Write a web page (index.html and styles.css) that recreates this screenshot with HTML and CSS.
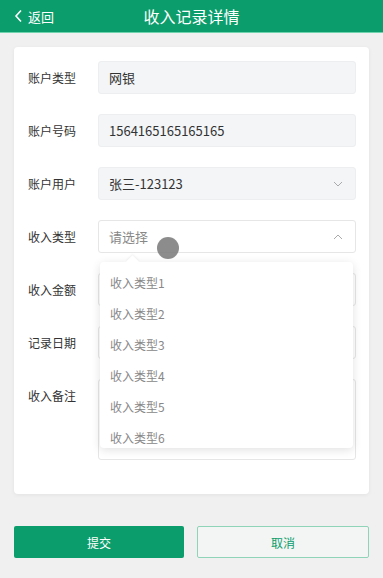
FILE: index.html
```html
<!DOCTYPE html>
<html lang="zh-CN">
<head>
    <meta charset="UTF-8">
    <meta name="viewport" content="width=device-width, initial-scale=1.0">
    <title>收入记录详情</title>
    <link rel="stylesheet" href="styles.css">
</head>
<body>
    <div class="header">
        <div class="back">
            <svg width="9" height="14" viewBox="0 0 9 14"><path d="M7 1.5 L2 7 L7 12.5" fill="none" stroke="#fff" stroke-width="1.6"/></svg>
            <span>返回</span>
        </div>
        <div class="title">收入记录详情</div>
    </div>

    <div class="card">
        <div class="row">
            <label>账户类型</label>
            <div class="field readonly">网银</div>
        </div>
        <div class="row">
            <label>账户号码</label>
            <div class="field readonly">1564165165165165</div>
        </div>
        <div class="row">
            <label>账户用户</label>
            <div class="field readonly select">
                <span>张三-123123</span>
                <svg class="caret" width="10" height="6" viewBox="0 0 10 6"><path d="M1 1 L5 5 L9 1" fill="none" stroke="#aaa" stroke-width="1"/></svg>
            </div>
        </div>
        <div class="row">
            <label>收入类型</label>
            <div class="field select open">
                <span class="placeholder">请选择</span>
                <svg class="caret" width="10" height="6" viewBox="0 0 10 6"><path d="M1 5 L5 1 L9 5" fill="none" stroke="#aaa" stroke-width="1"/></svg>
                <div class="touch"></div>
                <div class="dropdown">
                    <div class="arrow"></div>
                    <ul>
                        <li>收入类型1</li>
                        <li>收入类型2</li>
                        <li>收入类型3</li>
                        <li>收入类型4</li>
                        <li>收入类型5</li>
                        <li>收入类型6</li>
                    </ul>
                </div>
            </div>
        </div>
        <div class="row">
            <label>收入金额</label>
            <div class="field"></div>
        </div>
        <div class="row">
            <label>记录日期</label>
            <div class="field"></div>
        </div>
        <div class="row">
            <label>收入备注</label>
            <div class="field textarea"></div>
        </div>
    </div>

    <div class="buttons">
        <button class="primary">提交</button>
        <button class="plain">取消</button>
    </div>
</body>
</html>
```

FILE: styles.css
```css
body {
    margin: 0;
    background: #f0f0f0;
    font-family: "Noto Sans CJK SC", "Noto Sans", sans-serif;
    color: #333;
}
.header {
    height: 32px;
    background: #0b9d6b;
    border-bottom: 1px solid #6fd3ad;
    display: flex;
    align-items: center;
    position: relative;
    color: #fff;
}
.back {
    display: flex;
    align-items: center;
    gap: 5px;
    padding-left: 14px;
    font-size: 13px;
}
.title {
    position: absolute;
    left: 0;
    right: 0;
    text-align: center;
    font-size: 16px;
    pointer-events: none;
}
.card {
    margin: 14px 14px 0;
    background: #fff;
    border-radius: 4px;
    padding: 14px 13px 34px 14px;
    box-shadow: 0 1px 4px rgba(0, 0, 0, 0.06);
    display: flex;
    flex-direction: column;
    gap: 20px;
}
.row {
    display: flex;
    align-items: flex-start;
}
.row label {
    width: 70px;
    flex-shrink: 0;
    font-size: 12px;
    line-height: 33px;
    color: #333;
}
.field {
    flex: 1;
    height: 33px;
    box-sizing: border-box;
    border: 1px solid #e6e6e6;
    border-radius: 3px;
    background: #fff;
    padding: 0 10px;
    display: flex;
    align-items: center;
    font-size: 13px;
    color: #333;
    position: relative;
}
.field.readonly {
    background: #f4f5f7;
    border-color: #eceef0;
}
.field.select {
    justify-content: space-between;
}
.field.textarea {
    height: 81px;
}
.caret {
    margin-right: 2px;
}
.placeholder {
    color: #888;
}
.touch {
    position: absolute;
    left: 58px;
    top: 16px;
    width: 22px;
    height: 22px;
    border-radius: 50%;
    background: rgba(120, 120, 120, 0.85);
}
.dropdown {
    position: absolute;
    top: 41px;
    left: 1px;
    right: 2px;
    height: 186px;
    background: #fff;
    border-radius: 4px;
    box-shadow: 0 2px 10px rgba(0, 0, 0, 0.12);
    z-index: 5;
}
.arrow {
    position: absolute;
    top: -5px;
    left: 28px;
    width: 9px;
    height: 9px;
    background: #fff;
    transform: rotate(45deg);
    box-shadow: -1px -1px 2px rgba(0, 0, 0, 0.05);
}
.dropdown ul {
    list-style: none;
    margin: 0;
    padding: 5px 0 0;
    height: 100%;
    box-sizing: border-box;
    overflow: hidden;
    position: relative;
}
.dropdown li {
    height: 31px;
    line-height: 31px;
    padding-left: 10px;
    font-size: 12px;
    color: #888;
}
.buttons {
    display: flex;
    gap: 13px;
    margin: 32px 14px 0;
}
.buttons button {
    flex: 1;
    height: 32px;
    border-radius: 2px;
    font-family: inherit;
    font-size: 12px;
    cursor: pointer;
}
.primary {
    background: #0b9d6b;
    color: #fff;
    border: none;
}
.plain {
    background: #f3f5f4;
    color: #0b9d6b;
    border: 1px solid #8fd3b8;
}
```
